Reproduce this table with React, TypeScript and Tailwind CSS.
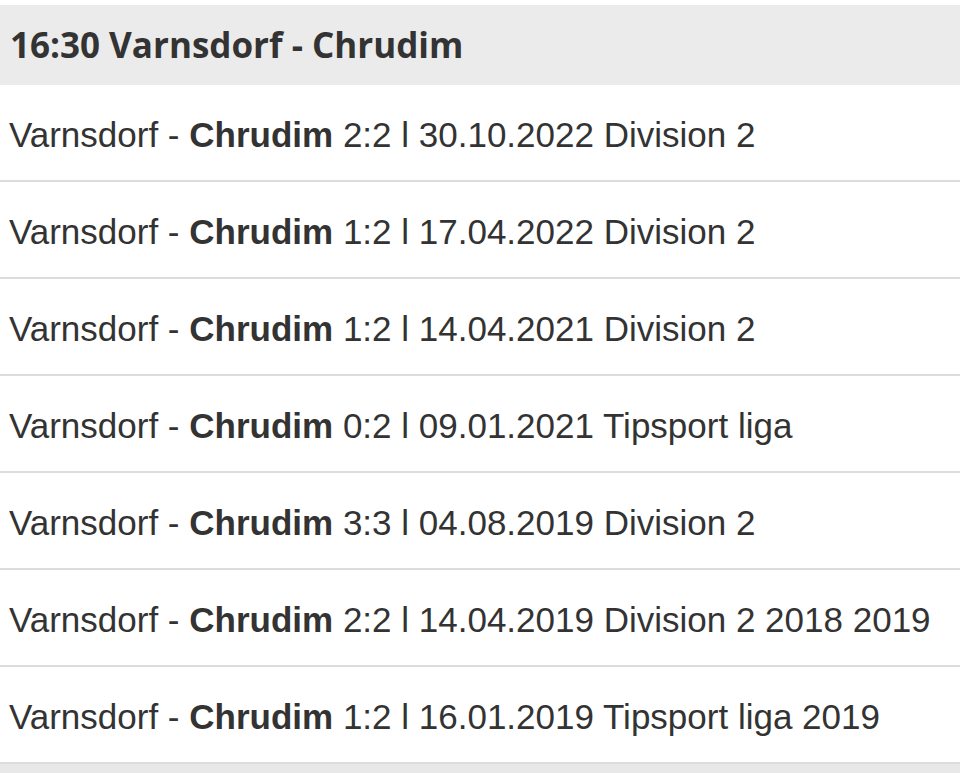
import React from 'react';

const matches = [
  { score: '2:2', date: '30.10.2022', league: 'Division 2' },
  { score: '1:2', date: '17.04.2022', league: 'Division 2' },
  { score: '1:2', date: '14.04.2021', league: 'Division 2' },
  { score: '0:2', date: '09.01.2021', league: 'Tipsport liga' },
  { score: '3:3', date: '04.08.2019', league: 'Division 2' },
  { score: '2:2', date: '14.04.2019', league: 'Division 2 2018 2019' },
  { score: '1:2', date: '16.01.2019', league: 'Tipsport liga 2019' },
];

export default function App() {
  return (
    <div className="w-[960px] h-[773px] overflow-hidden bg-white pt-[5px]">
      {/* Header */}
      <div className="h-[80px] bg-[#ebebeb] flex items-center pl-[10px]">
        <h2 className="text-[35px] font-bold text-[#333] font-['Open_Sans',sans-serif]">
          16:30 Varnsdorf - Chrudim
        </h2>
      </div>

      {/* History rows */}
      <div>
        {matches.map((m, i) => (
          <div
            key={i}
            className="h-[97px] flex items-center pl-[9px] pt-[6px] border-b-2 border-[#dcdcdc] text-[35px] text-[#333] font-['Liberation_Sans',Arial,sans-serif]"
          >
            <span>
              Varnsdorf - <span className="font-bold">Chrudim</span> {m.score} l {m.date} {m.league}
            </span>
          </div>
        ))}
      </div>
      <div className="h-[20px] bg-[#e8e8e8]" />
    </div>
  );
}
